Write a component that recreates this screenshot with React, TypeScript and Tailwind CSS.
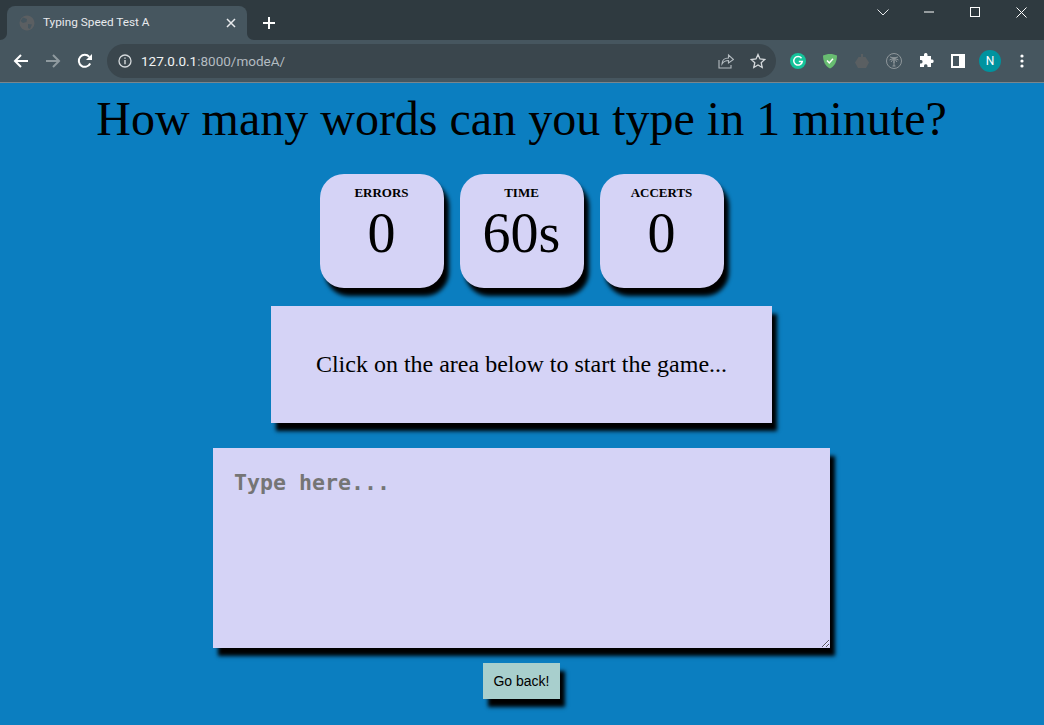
import React from "react";

const Slot = ({ children, className = "" }: { children: React.ReactNode; className?: string }) => (
  <div className={"w-8 h-8 flex items-center justify-center shrink-0 " + className}>{children}</div>
);

function TabStrip() {
  return (
    <div className="h-10 bg-[#2f3a40] flex items-end pl-[7px] relative">
      <div className="relative w-[240px] h-[34px] bg-[#46565f] rounded-t-[8px] flex items-center pl-[12px] pr-[11px]">
        <svg className="absolute left-[-7px] bottom-0" width="7" height="7" viewBox="0 0 7 7"><path d="M7 0V7H0C4 7 7 4 7 0Z" fill="#46565f" /></svg>
        <svg className="absolute right-[-7px] bottom-0" width="7" height="7" viewBox="0 0 7 7"><path d="M0 0V7H7C3 7 0 4 0 0Z" fill="#46565f" /></svg>
        <svg width="16" height="16" viewBox="0 0 16 16" className="shrink-0">
          <circle cx="8" cy="8" r="7.500" fill="#5b5f62" />
          <path d="M4 2.500 8 4l-.5 3L4 8 1.500 6ZM9 9l4 .5-2 4.500-2-1Z" fill="#46565f" />
        </svg>
        <span className="ml-[8px] text-[11.8px] leading-none text-[#e8eaed] font-['Roboto',sans-serif] flex-1">Typing Speed Test A</span>
        <svg width="10" height="10" viewBox="0 0 10 10"><path d="M1 1l8 8M9 1l-8 8" stroke="#e8eaed" strokeWidth="1.500" /></svg>
      </div>
      <div className="self-center mt-[6px] ml-[16px]">
        <svg width="12" height="12" viewBox="0 0 12 12"><path d="M6 0v12M0 6h12" stroke="#fff" strokeWidth="2" /></svg>
      </div>
      <div className="ml-auto flex self-start h-[24px] items-center">
        <div className="w-[46px] flex justify-center">
          <svg width="12" height="7" viewBox="0 0 12 7"><path d="M.5.5 6 6 11.500.5" stroke="#e8eaed" fill="none" /></svg>
        </div>
        <div className="w-[46px] flex justify-center">
          <svg width="10" height="2" viewBox="0 0 10 2"><path d="M0 1h10" stroke="#fff" /></svg>
        </div>
        <div className="w-[46px] flex justify-center">
          <svg width="10" height="10" viewBox="0 0 10 10"><rect x=".5" y=".5" width="9" height="9" stroke="#fff" fill="none" /></svg>
        </div>
        <div className="w-[46px] flex justify-center">
          <svg width="11" height="11" viewBox="0 0 11 11"><path d="M.5.5l10 10M10.500.5l-10 10" stroke="#fff" /></svg>
        </div>
      </div>
    </div>
  );
}

function Toolbar() {
  return (
    <div className="h-[43px] bg-[#46565f] border-b border-[#7a868d] flex items-center pl-[5px] pr-[6px] font-['Roboto',sans-serif]">
      <Slot>
        <svg width="16" height="16" viewBox="0 0 16 16"><path d="M15 8H2M8 2 2 8l6 6" stroke="#fff" strokeWidth="2" fill="none" /></svg>
      </Slot>
      <Slot>
        <svg width="16" height="16" viewBox="0 0 16 16"><path d="M1 8h13M8 2l6 6-6 6" stroke="#8f9a9f" strokeWidth="2" fill="none" /></svg>
      </Slot>
      <Slot>
        <svg width="16" height="16" viewBox="0 0 16 16"><path d="M13.200 10.500A6 6 0 1 1 12.300 3.800" stroke="#fff" strokeWidth="2" fill="none" /><path d="M15 1v6H9Z" fill="#fff" /></svg>
      </Slot>
      <div className="ml-[6px] h-[34px] w-[669px] rounded-full bg-[#3a464d] flex items-center pl-[11px] pr-[2px]">
        <svg width="14" height="14" viewBox="0 0 14 14" className="shrink-0">
          <circle cx="7" cy="7" r="6" stroke="#d5d9dc" strokeWidth="1.300" fill="none" />
          <path d="M7 6v4.200M7 3.500v1.300" stroke="#d5d9dc" strokeWidth="1.400" />
        </svg>
        <span className="ml-[9px] text-[13.5px] text-[#b4bcc1] flex-1"><span className="text-[#f1f3f4]">127.0.0.1</span>:8000/modeA/</span>
        <Slot>
          <svg width="16" height="16" viewBox="0 0 16 16" fill="none" stroke="#b4bcc1" strokeWidth="1.100"><path d="M1 7v8h12v-3" /><path d="M4 11c0-4 3-6 6.500-6V2L15.500 6.500 10.500 10V7.500C8 7.500 5.500 8.500 4 11Z" /></svg>
        </Slot>
        <Slot>
          <svg width="16" height="16" viewBox="0 0 16 16"><path d="M8 1.500 10 6l4.800.5-3.600 3.200 1 4.800L8 12l-4.200 2.500 1-4.800L1.200 6.500 6 6Z" stroke="#d5d9dc" strokeWidth="1.300" fill="none" /></svg>
        </Slot>
      </div>
      <Slot className="ml-[6px]">
        <svg width="16" height="16" viewBox="0 0 16 16"><circle cx="8" cy="8" r="8" fill="#15c39a" /><path d="M11.500 5.200A4.300 4.300 0 1 0 12.300 8.500H8.800" stroke="#fff" strokeWidth="1.500" fill="none" /></svg>
      </Slot>
      <Slot>
        <svg width="16" height="16" viewBox="0 0 16 16"><path d="M8 1c2.500 0 5 .6 7 1.500C15 8 13 13 8 15.500 3 13 1 8 1 2.500 3 1.600 5.500 1 8 1Z" fill="#68bc71" /><path d="M5 7.500 7.300 10 11 5.800" stroke="#fff" strokeWidth="1.500" fill="none" /></svg>
      </Slot>
      <Slot>
        <svg width="16" height="16" viewBox="0 0 16 16"><path d="M4.500 4h7L15 9.500 12 15H4L1 9.500Z" fill="#5a5f62" /><path d="M8 1v3" stroke="#5a5f62" strokeWidth="2" /></svg>
      </Slot>
      <Slot>
        <svg width="16" height="16" viewBox="0 0 16 16" fill="none" stroke="#8f979b" strokeWidth="1"><circle cx="8" cy="8" r="7.500" /><path d="M8 4v9M8 5 4 4M8 5l4-1M8 5 3.500 7M8 5l4.500 2M8 5 5 9M8 5l3 4M6.500 13h3M7 7h2M7 9h2" /></svg>
      </Slot>
      <Slot>
        <svg width="16" height="16" viewBox="0 0 16 16"><path d="M6 1.500a1.800 1.800 0 0 1 3.500 0V3H13v3.500h1.300a1.800 1.800 0 0 1 0 3.500H13v4H9.500v-1.300a1.800 1.800 0 0 0-3.500 0V14H2v-3.500h1.200a1.800 1.800 0 0 0 0-3.500H2V3h4Z" fill="#fff" /></svg>
      </Slot>
      <Slot>
        <svg width="14" height="14" viewBox="0 0 14 14"><rect x="1" y="1" width="12" height="12" fill="none" stroke="#fff" strokeWidth="2" /><rect x="8" y="1" width="5" height="12" fill="#fff" /></svg>
      </Slot>
      <Slot>
        <div className="w-[22px] h-[22px] rounded-full bg-[#00939f] text-white text-[12px] flex items-center justify-center">N</div>
      </Slot>
      <Slot>
        <svg width="4" height="14" viewBox="0 0 4 14" fill="#fff"><circle cx="2" cy="2" r="1.600" /><circle cx="2" cy="7" r="1.600" /><circle cx="2" cy="12" r="1.600" /></svg>
      </Slot>
    </div>
  );
}

const Stat = ({ label, value }: { label: string; value: string }) => (
  <div className="w-[124px] h-[114px] bg-[#d5d3f6] rounded-[24px] shadow-[5px_8px_4px_#000] flex flex-col items-center pt-[12px] text-black">
    <div className="text-[13px] leading-[14px] font-bold">{label}</div>
    <div className="text-[56px] leading-[64px] mt-[1px]">{value}</div>
  </div>
);

export default function App() {
  return (
    <div className="w-[1044px] h-[725px] overflow-hidden flex flex-col bg-[#0b7ec0]">
      <TabStrip />
      <Toolbar />
      <main className="flex-1 flex flex-col items-center pr-px font-['Liberation_Serif',serif] text-black">
        <h1 className="text-[48px] leading-[55px] mt-[8px] whitespace-nowrap">How many words can you type in 1 minute?</h1>
        <div className="flex gap-4 mt-[28px]">
          <Stat label="ERRORS" value="0" />
          <Stat label="TIME" value="60s" />
          <Stat label="ACCERTS" value="0" />
        </div>
        <div className="w-[501px] h-[117px] mt-[18px] pb-[2px] bg-[#d5d3f6] shadow-[5px_8px_4px_#000] flex items-center justify-center text-[24px]">
          Click on the area below to start the game...
        </div>
        <textarea
          placeholder="Type here..."
          className="block w-[617px] h-[200px] mt-[25px] bg-[#d5d3f6] shadow-[5px_8px_4px_#000] px-[21px] py-[20px] text-[21.6px] leading-[29px] font-bold font-['DejaVu_Sans_Mono',monospace] outline-none placeholder:text-[#757575]"
        />
        <button className="w-[77px] h-[36px] mt-[15px] bg-[#a8cfcd] shadow-[5px_8px_4px_#000] text-[14px] font-['Liberation_Sans',sans-serif] text-black">
          Go back!
        </button>
      </main>
    </div>
  );
}
